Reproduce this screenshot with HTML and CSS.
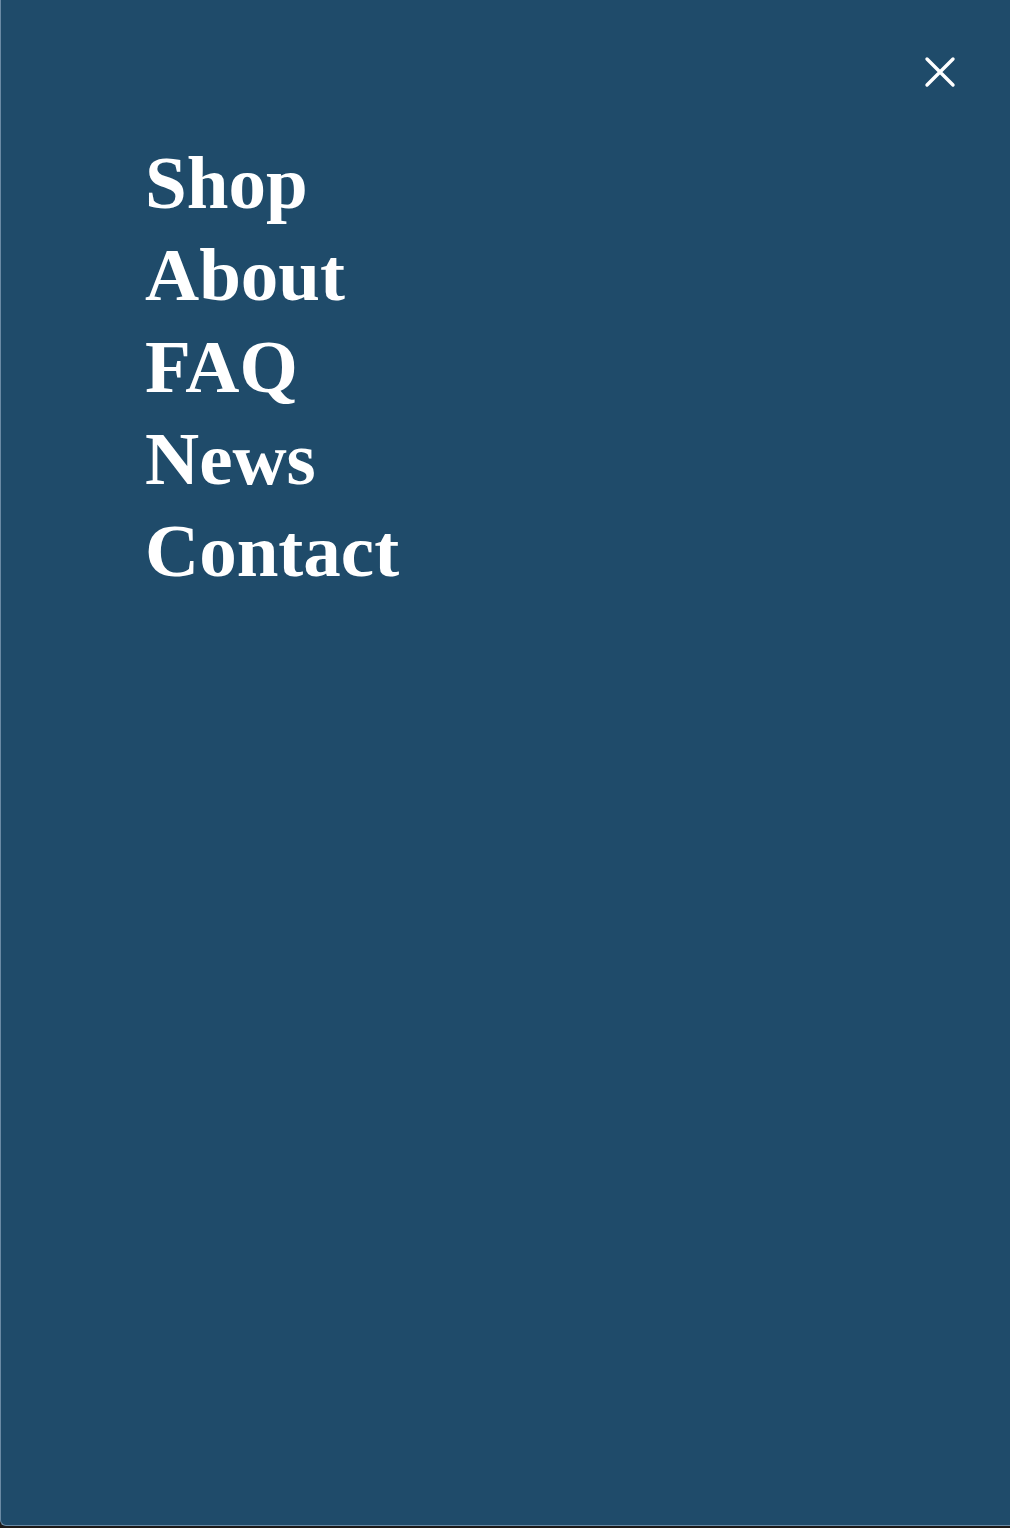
FILE: index.html
```html
<!DOCTYPE html>
<html lang="en">
<head>
<meta charset="utf-8">
<title>Menu</title>
<link rel="stylesheet" href="styles.css">
</head>
<body>
<div class="panel">
  <header class="topbar">
    <button class="close" aria-label="Close menu">
      <svg width="32" height="32" viewBox="0 0 32 32" aria-hidden="true">
        <path d="M3 3 L29 29 M29 3 L3 29" stroke="#fff" stroke-width="3.4" stroke-linecap="round" fill="none"/>
      </svg>
    </button>
  </header>
  <nav class="menu">
    <a href="#" class="menu-item">Shop</a>
    <a href="#" class="menu-item">About</a>
    <a href="#" class="menu-item">FAQ</a>
    <a href="#" class="menu-item">News</a>
    <a href="#" class="menu-item">Contact</a>
  </nav>
</div>
</body>
</html>
```
FILE: styles.css
```css
html, body {
  margin: 0;
  padding: 0;
  height: 100%;
}
body {
  background: #1c1a18;
  overflow: hidden;
}
.panel {
  box-sizing: border-box;
  height: 1526px;
  background: #1f4b6a;
  border-left: 1px solid #6a8aa4;
  border-bottom: 1px solid #6a8aa4;
  border-bottom-left-radius: 6px;
  display: flex;
  flex-direction: column;
}
.topbar {
  display: flex;
  justify-content: flex-end;
  padding: 56px 54px 0 0;
}
.close {
  background: none;
  border: 0;
  padding: 0;
  width: 32px;
  height: 32px;
  cursor: pointer;
  display: block;
}
.close svg { display: block; }
.menu {
  display: flex;
  flex-direction: column;
  align-items: flex-start;
  padding: 49px 0 0 144px;
}
.menu-item {
  font-family: "Liberation Serif", "Times New Roman", serif;
  font-weight: 700;
  font-size: 75px;
  line-height: 92px;
  color: #ffffff;
  text-decoration: none;
}
```
